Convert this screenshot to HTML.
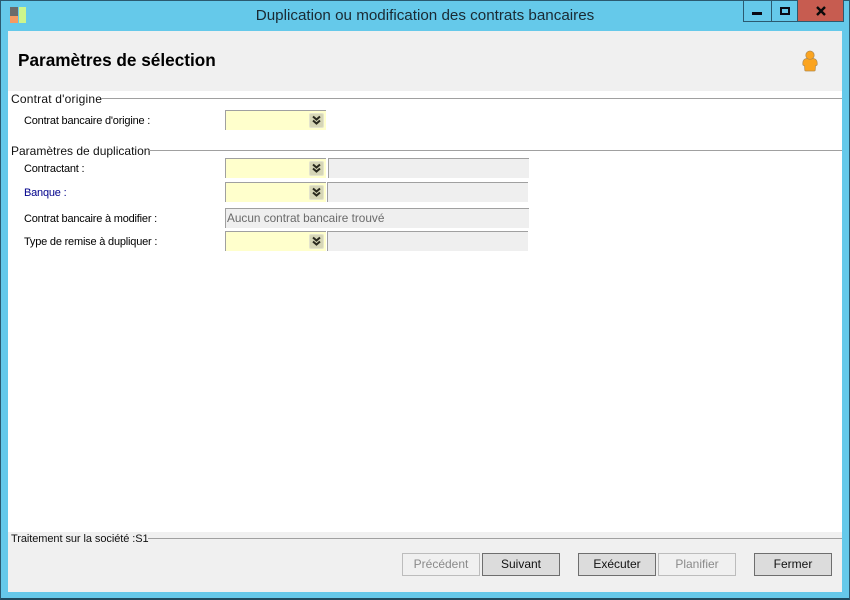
<!DOCTYPE html>
<html lang="fr">
<head>
<meta charset="utf-8">
<title>Duplication ou modification des contrats bancaires</title>
<style>
html,body{margin:0;padding:0;width:850px;height:600px;overflow:hidden;background:#65c9ea;font-family:"Liberation Sans",sans-serif;}
.a{position:absolute;box-sizing:border-box;white-space:nowrap;}
#win{position:absolute;left:0;top:0;width:850px;height:600px;box-sizing:border-box;border:1px solid #2b5a70;border-bottom:2px solid #1f4a5e;background:#65c9ea;}
.lbl{font-size:11px;letter-spacing:-.2px;color:#000;line-height:14px;}
.grp{font-size:12px;color:#111;line-height:14px;}
.ln{height:1px;background:#a0a0a0;}
.combo{width:101px;height:20px;background:#ffffcc;border-top:1px solid #a0a0a0;border-left:1px solid #a0a0a0;}
.ro{height:20px;background:#efefef;border-top:1px solid #a0a0a0;border-left:1px solid #a0a0a0;}
.dd{position:absolute;left:83px;top:2px;width:15px;height:15px;background:#d6d6b6;border:1px solid #e4e4cc;box-sizing:border-box;border-radius:2px;}
.dd svg{position:absolute;left:1px;top:1px;}
.btn{height:23px;width:78px;font-size:12px;line-height:21px;text-align:center;border:1px solid #6e6e6e;background:#dcdcdc;color:#111;}
.btn.off{border-color:#bcbcbc;background:#f0f0f0;color:#8a8a8a;}
</style>
</head>
<body>
<div id="win"></div>

<!-- App icon -->
<div class="a" style="left:10px;top:7px;width:8px;height:9px;background:#6b6b6b;"></div>
<div class="a" style="left:10px;top:16px;width:8px;height:7px;background:#f59a62;"></div>
<div class="a" style="left:19px;top:7px;width:7px;height:16px;background:#cdf58c;"></div>

<!-- Title -->
<div class="a" style="left:0;top:7px;width:850px;text-align:center;font-size:15.2px;line-height:18px;color:#1a2a33;">Duplication ou modification des contrats bancaires</div>

<!-- Window buttons -->
<div class="a" style="left:743px;top:0;width:29px;height:22px;border:1px solid #2b5a70;border-top:0;"></div>
<div class="a" style="left:771px;top:0;width:27px;height:22px;border:1px solid #2b5a70;border-top:0;border-left:0;"></div>
<div class="a" style="left:797px;top:0;width:47px;height:22px;background:#c75c50;border:1px solid #2b5a70;border-top:0;"></div>
<div class="a" style="left:752px;top:12px;width:10px;height:3px;background:#0a0a14;"></div>
<div class="a" style="left:780px;top:7px;width:10px;height:8px;border:2px solid #0a0a14;"></div>
<svg class="a" style="left:816px;top:6px;" width="10" height="10" viewBox="0 0 10 10"><path d="M1 1L9 9M9 1L1 9" stroke="#0a0a0a" stroke-width="2.4" fill="none"/></svg>

<!-- Client area -->
<div class="a" style="left:8px;top:31px;width:834px;height:561px;background:#fff;"></div>
<div class="a" style="left:8px;top:31px;width:834px;height:60px;background:#f0f0f0;"></div>
<div class="a" style="left:8px;top:532px;width:834px;height:60px;background:#f0f0f0;"></div>

<div class="a" style="left:18px;top:50px;font-size:17.2px;font-weight:bold;line-height:20px;color:#000;">Paramètres de sélection</div>

<!-- User icon -->
<svg class="a" style="left:801px;top:50px;" width="18" height="22" viewBox="0 0 18 22">
<path d="M5.500 8.500C3 9 1.800 10.500 1.800 13L1.800 14.500Q1.800 15.500 3.500 15.700L3.800 20.300Q3.800 21 4.600 21L13.400 21Q14.200 21 14.200 20.300L14.500 15.700Q16.200 15.500 16.200 14.500L16.200 13C16.200 10.500 15 9 12.500 8.500Z" fill="#fba41f" stroke="#b08a50" stroke-width=".7"/>
<circle cx="9" cy="5.200" r="4.200" fill="#fba41f" stroke="#b08a50" stroke-width=".7"/>
</svg>

<!-- Group 1 -->
<div class="a grp" style="left:11px;top:92px;letter-spacing:.2px;">Contrat d'origine</div>
<div class="a ln" style="left:101px;top:98px;width:741px;"></div>
<div class="a lbl" style="left:24px;top:114px;">Contrat bancaire d'origine :</div>
<div class="a combo" style="left:225px;top:110px;"><div class="dd"><svg width="11" height="11" viewBox="0 0 11 11"><path d="M2 1.500L5.500 4.500L9 1.500M2 5.500L5.500 8.500L9 5.500" stroke="#2a2a1e" stroke-width="2" fill="none"/></svg></div></div>

<!-- Group 2 -->
<div class="a grp" style="left:11px;top:144px;">Paramètres de duplication</div>
<div class="a ln" style="left:149px;top:150px;width:693px;"></div>

<div class="a lbl" style="left:24px;top:162px;">Contractant :</div>
<div class="a combo" style="left:225px;top:158px;"><div class="dd"><svg width="11" height="11" viewBox="0 0 11 11"><path d="M2 1.500L5.500 4.500L9 1.500M2 5.500L5.500 8.500L9 5.500" stroke="#2a2a1e" stroke-width="2" fill="none"/></svg></div></div>
<div class="a ro" style="left:328px;top:158px;width:201px;"></div>

<div class="a lbl" style="left:24px;top:186px;color:#00008b;">Banque :</div>
<div class="a combo" style="left:225px;top:182px;"><div class="dd"><svg width="11" height="11" viewBox="0 0 11 11"><path d="M2 1.500L5.500 4.500L9 1.500M2 5.500L5.500 8.500L9 5.500" stroke="#2a2a1e" stroke-width="2" fill="none"/></svg></div></div>
<div class="a ro" style="left:327px;top:182px;width:201px;"></div>

<div class="a lbl" style="left:24px;top:212px;">Contrat bancaire à modifier :</div>
<div class="a ro" style="left:225px;top:208px;width:304px;font-size:11.8px;line-height:18px;color:#6a6a6a;padding-left:1px;">Aucun contrat bancaire trouvé</div>

<div class="a lbl" style="left:24px;top:235px;">Type de remise à dupliquer :</div>
<div class="a combo" style="left:225px;top:231px;"><div class="dd"><svg width="11" height="11" viewBox="0 0 11 11"><path d="M2 1.500L5.500 4.500L9 1.500M2 5.500L5.500 8.500L9 5.500" stroke="#2a2a1e" stroke-width="2" fill="none"/></svg></div></div>
<div class="a ro" style="left:327px;top:231px;width:201px;"></div>

<!-- Footer -->
<div class="a grp" style="left:11px;top:532px;font-size:11px;letter-spacing:-.07px;">Traitement sur la société :S1</div>
<div class="a ln" style="left:148px;top:538px;width:694px;"></div>

<div class="a btn off" style="left:402px;top:553px;">Précédent</div>
<div class="a btn" style="left:482px;top:553px;">Suivant</div>
<div class="a btn" style="left:578px;top:553px;">Exécuter</div>
<div class="a btn off" style="left:658px;top:553px;">Planifier</div>
<div class="a btn" style="left:754px;top:553px;">Fermer</div>
</body>
</html>
